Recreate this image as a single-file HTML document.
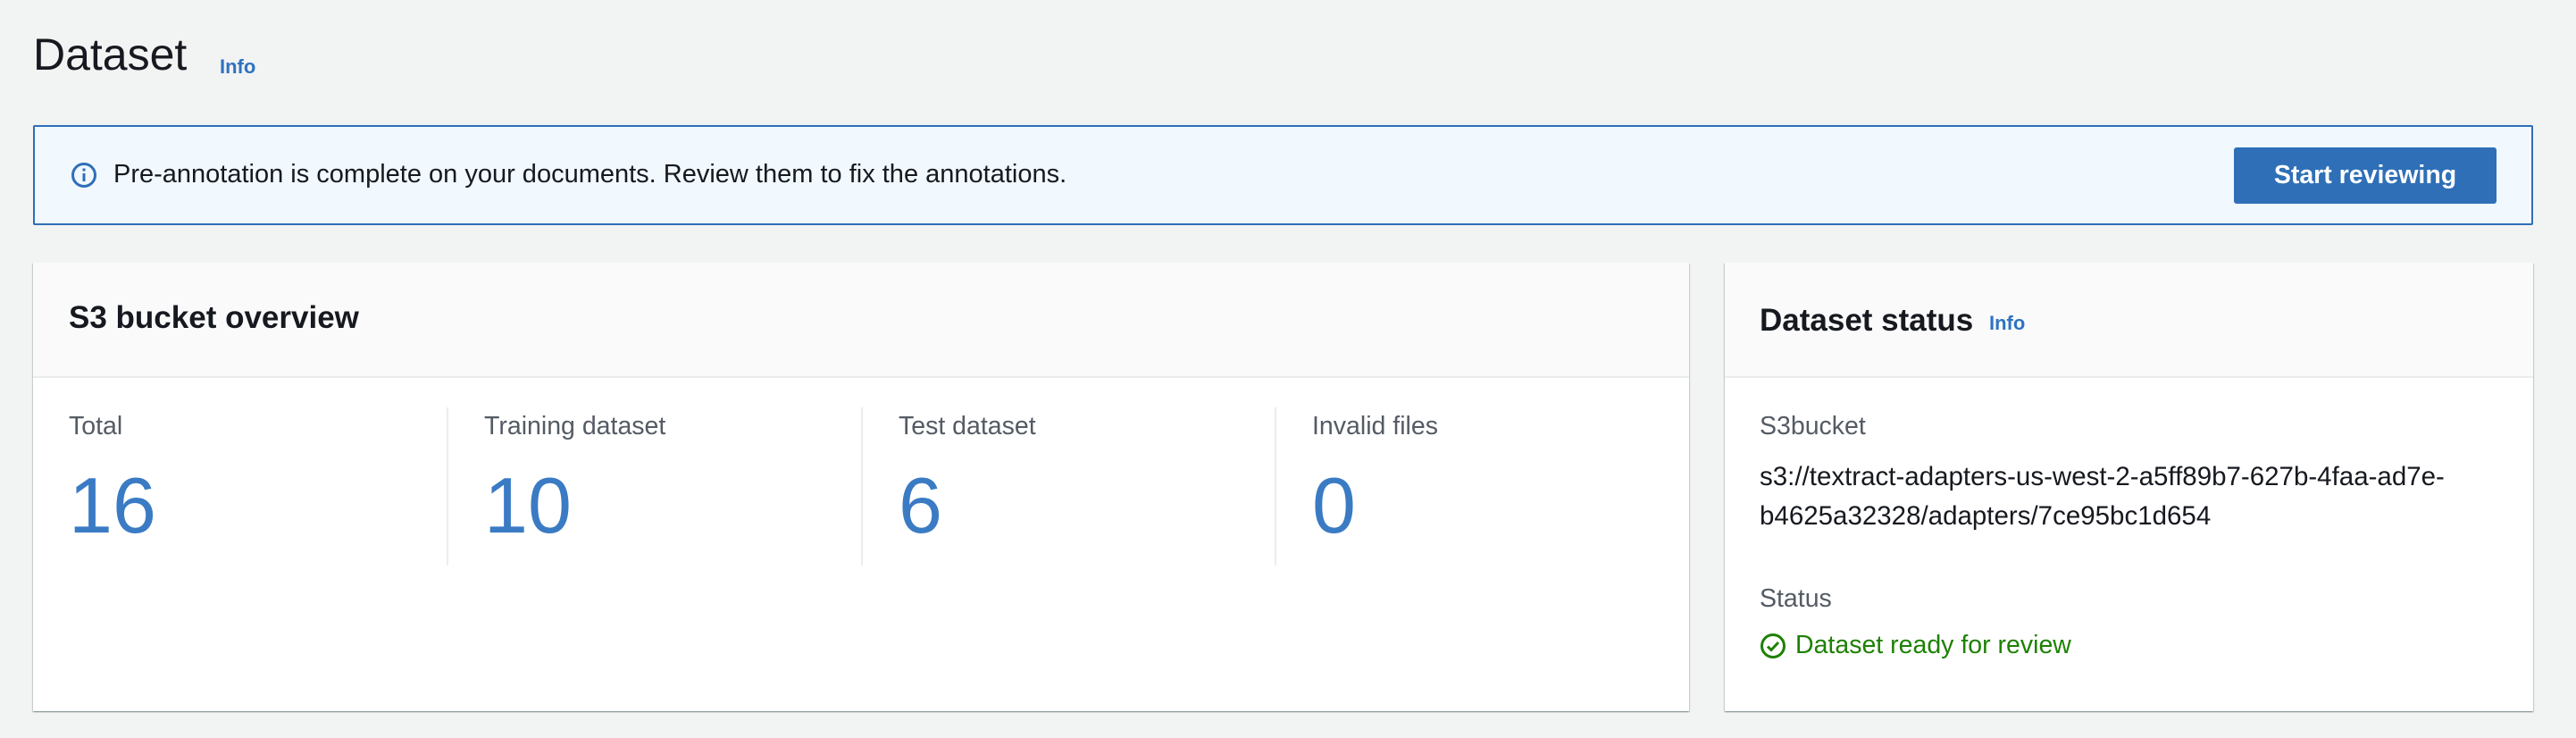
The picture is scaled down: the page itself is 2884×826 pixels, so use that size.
<!DOCTYPE html>
<html><head><meta charset="utf-8"><style>
*{margin:0;padding:0;box-sizing:border-box}
body{width:2884px;height:826px;background:#f2f3f3;font-family:"Liberation Sans",sans-serif;color:#16191f;position:relative;overflow:hidden}
.a{position:absolute;white-space:nowrap}
.card{position:absolute;background:#fff;box-shadow:0 1px 1px 0 rgba(0,28,36,.3),1px 1px 1px 0 rgba(0,28,36,.15),-1px 1px 1px 0 rgba(0,28,36,.15)}
.hd{position:absolute;left:0;right:0;top:0;height:129px;background:#fafafa;border-bottom:2px solid #eaeded}
.lbl{color:#545b64;font-size:28.5px}
.num{color:#3a7bc4;font-size:88px;font-weight:300;line-height:1}
.div{position:absolute;top:456px;width:2px;height:177px;background:#eaeded}
.info{color:#2e73c0;font-weight:bold;font-size:22px}
</style></head><body>
<div class="a" style="left:37px;top:33px;font-size:50px;line-height:56px">Dataset</div>
<div class="a info" style="left:246px;top:62px">Info</div>

<div style="position:absolute;left:37px;top:140px;width:2799px;height:112px;background:#f1f8fe;border:2px solid #2e6fb8;border-radius:2px"></div>
<svg class="a" style="left:79px;top:181px" width="30" height="30" viewBox="0 0 30 30"><circle cx="15" cy="15" r="12.5" fill="none" stroke="#2e6fb8" stroke-width="3"/><rect x="13.5" y="13" width="3" height="9" fill="#2e6fb8"/><rect x="13.5" y="7.5" width="3" height="3" fill="#2e6fb8"/></svg>
<div class="a" style="left:127px;top:178px;font-size:29px;line-height:34px">Pre-annotation is complete on your documents. Review them to fix the annotations.</div>
<div style="position:absolute;left:2501px;top:165px;width:294px;height:63px;background:#2e6fb8;border-radius:3px;color:#fff;font-weight:bold;font-size:28.5px;line-height:63px;text-align:center">Start reviewing</div>

<div class="card" style="left:37px;top:294px;width:1854px;height:502px"><div class="hd"></div></div>
<div class="a" style="left:77px;top:336px;font-size:35px;font-weight:bold;line-height:40px">S3 bucket overview</div>
<div class="div" style="left:500px"></div><div class="div" style="left:964px"></div><div class="div" style="left:1427px"></div>
<div class="a lbl" style="left:77px;top:461px">Total</div>
<div class="a lbl" style="left:542px;top:461px">Training dataset</div>
<div class="a lbl" style="left:1006px;top:461px">Test dataset</div>
<div class="a lbl" style="left:1469px;top:461px">Invalid files</div>
<div class="a num" style="left:77px;top:522px">16</div>
<div class="a num" style="left:542px;top:522px">10</div>
<div class="a num" style="left:1006px;top:522px">6</div>
<div class="a num" style="left:1469px;top:522px">0</div>

<div class="card" style="left:1931px;top:294px;width:905px;height:502px"><div class="hd"></div></div>
<div class="a" style="left:1970px;top:339px;font-size:35px;font-weight:bold;line-height:40px">Dataset status</div>
<div class="a info" style="left:2227px;top:349px">Info</div>
<div class="a lbl" style="left:1970px;top:461px">S3bucket</div>
<div class="a" style="left:1970px;top:512px;font-size:29.5px;line-height:44px">s3://textract-adapters-us-west-2-a5ff89b7-627b-4faa-ad7e-<br>b4625a32328/adapters/7ce95bc1d654</div>
<div class="a lbl" style="left:1970px;top:654px">Status</div>
<svg class="a" style="left:1970px;top:708px" width="30" height="30" viewBox="0 0 30 30"><circle cx="15" cy="15" r="12.5" fill="none" stroke="#1d8102" stroke-width="3"/><path d="M9 15.5l4 4 8-8.5" fill="none" stroke="#1d8102" stroke-width="3"/></svg>
<div class="a" style="left:2010px;top:705px;font-size:28.5px;line-height:34px;color:#1d8102">Dataset ready for review</div>
</body></html>
